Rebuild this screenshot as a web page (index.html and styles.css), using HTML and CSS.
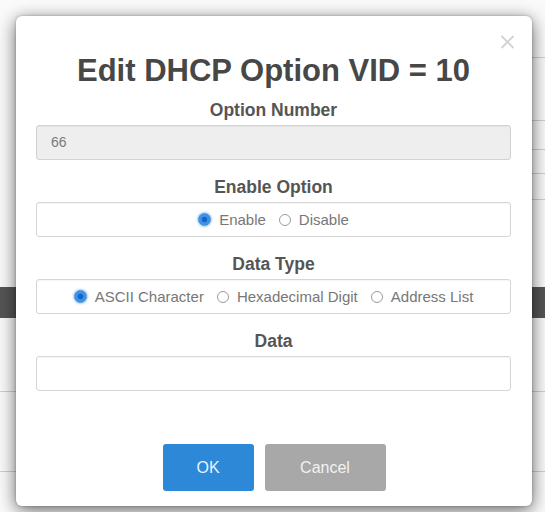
FILE: index.html
```html
<!DOCTYPE html>
<html lang="en">
<head>
<meta charset="utf-8">
<title>Edit DHCP Option</title>
<link rel="stylesheet" href="styles.css">
</head>
<body>
  <div class="page">
    <div class="row row-a"></div>
    <div class="row row-b"></div>
    <div class="row row-c"></div>
    <div class="row row-d"></div>
    <div class="row row-e"></div>
    <div class="row row-f"></div>
    <div class="row row-head"></div>
    <div class="row row-g"></div>
    <div class="row row-h"></div>
  </div>

  <div class="modal">
    <button class="close" type="button" aria-label="Close">
      <svg width="15" height="14" viewBox="0 0 15 14"><path d="M1.5 1 L13.5 13 M13.5 1 L1.5 13" stroke="#d2d2d2" stroke-width="1.8" fill="none"/></svg>
    </button>
    <h1 class="title">Edit DHCP Option VID = 10</h1>

    <div class="field">
      <div class="label">Option Number</div>
      <div class="input input-disabled">66</div>
    </div>

    <div class="field">
      <div class="label">Enable Option</div>
      <div class="input radio-box">
        <span class="radio-item"><span class="radio checked"></span>Enable</span>
        <span class="radio-item"><span class="radio"></span>Disable</span>
      </div>
    </div>

    <div class="field">
      <div class="label">Data Type</div>
      <div class="input radio-box">
        <span class="radio-item"><span class="radio checked"></span>ASCII Character</span>
        <span class="radio-item"><span class="radio"></span>Hexadecimal Digit</span>
        <span class="radio-item"><span class="radio"></span>Address List</span>
      </div>
    </div>

    <div class="field field-last">
      <div class="label">Data</div>
      <div class="input"></div>
    </div>

    <div class="actions">
      <button class="btn btn-ok" type="button">OK</button>
      <button class="btn btn-cancel" type="button">Cancel</button>
    </div>
  </div>
</body>
</html>
```

FILE: styles.css
```css
* {
  box-sizing: border-box;
}

html, body {
  margin: 0;
  padding: 0;
}

body {
  width: 545px;
  height: 512px;
  overflow: hidden;
  background: #fafafa;
  font-family: "Liberation Sans", Arial, sans-serif;
  position: relative;
}

/* table rows of the page behind the dialog */
.page {
  display: flex;
  flex-direction: column;
}

.row {
  border-bottom: 1px solid #cfcfcf;
}

.row-a,
.row-b,
.row-c,
.row-d,
.row-e {
  margin-left: 24px;
}

.row-a { height: 58px; }
.row-b { height: 63px; }
.row-c { height: 29px; }
.row-d { height: 24px; }
.row-e { height: 26px; }
.row-f { height: 87px; border-bottom: none; }
.row-head { height: 31px; background: #555; border-bottom: none; }
.row-g { height: 74px; }
.row-h { height: 80px; }

/* dialog */
.modal {
  position: absolute;
  left: 16px;
  top: 16px;
  width: 516px;
  height: 490px;
  background: #fff;
  border-radius: 6px;
  box-shadow: 0 4px 18px rgba(0, 0, 0, 0.6), 0 0 3px rgba(0, 0, 0, 0.25);
  padding: 37px 21px 15px 20px;
  display: flex;
  flex-direction: column;
}

.close {
  position: absolute;
  top: 19px;
  right: 17px;
  width: 15px;
  height: 14px;
  padding: 0;
  border: 0;
  background: none;
  display: block;
}

.close svg {
  display: block;
}

.title {
  margin: 0 0 10px;
  font-size: 31px;
  line-height: 36px;
  font-weight: bold;
  color: #474747;
  text-align: center;
}

.field {
  margin-bottom: 16px;
}

.field-last {
  margin-bottom: 0;
}

.label {
  font-size: 17.5px;
  line-height: 22px;
  font-weight: bold;
  color: #555;
  text-align: center;
  margin-bottom: 4px;
}

.input {
  height: 35px;
  border: 1px solid #d6d6d6;
  border-radius: 3px;
  background: #fff;
  box-shadow: inset 0 1px 1px rgba(0, 0, 0, 0.04);
}

.input-disabled {
  background: #eeeeee;
  border-color: #d2d2d2;
  color: #7a7a7a;
  font-size: 14px;
  line-height: 33px;
  padding-left: 14px;
}

.radio-box {
  display: flex;
  align-items: center;
  justify-content: center;
  gap: 13px;
  font-size: 15px;
  color: #777;
}

.radio-item {
  display: inline-flex;
  align-items: center;
}

.radio {
  width: 12px;
  height: 12px;
  border-radius: 50%;
  border: 1px solid #9a9a9a;
  background: #fff;
  margin-right: 8px;
}

.radio.checked {
  width: 13px;
  height: 13px;
  border: 1px solid #3b8ee0;
  background: radial-gradient(circle, #1565c8 0 2.5px, #3f93e6 3.2px);
  box-shadow: 0 0 2px 1px rgba(70, 150, 230, 0.45);
}

.actions {
  margin-top: auto;
  display: flex;
  justify-content: center;
  gap: 11px;
  padding-left: 1px;
}

.btn {
  height: 47px;
  border: 0;
  border-radius: 3px;
  font-family: "Liberation Sans", Arial, sans-serif;
  font-size: 16px;
  padding: 0;
}

.btn-ok {
  width: 91px;
  background: #2d88d8;
  color: #eaf4ff;
}

.btn-cancel {
  width: 121px;
  background: #a8a8a8;
  color: #f2f2f2;
}
```
